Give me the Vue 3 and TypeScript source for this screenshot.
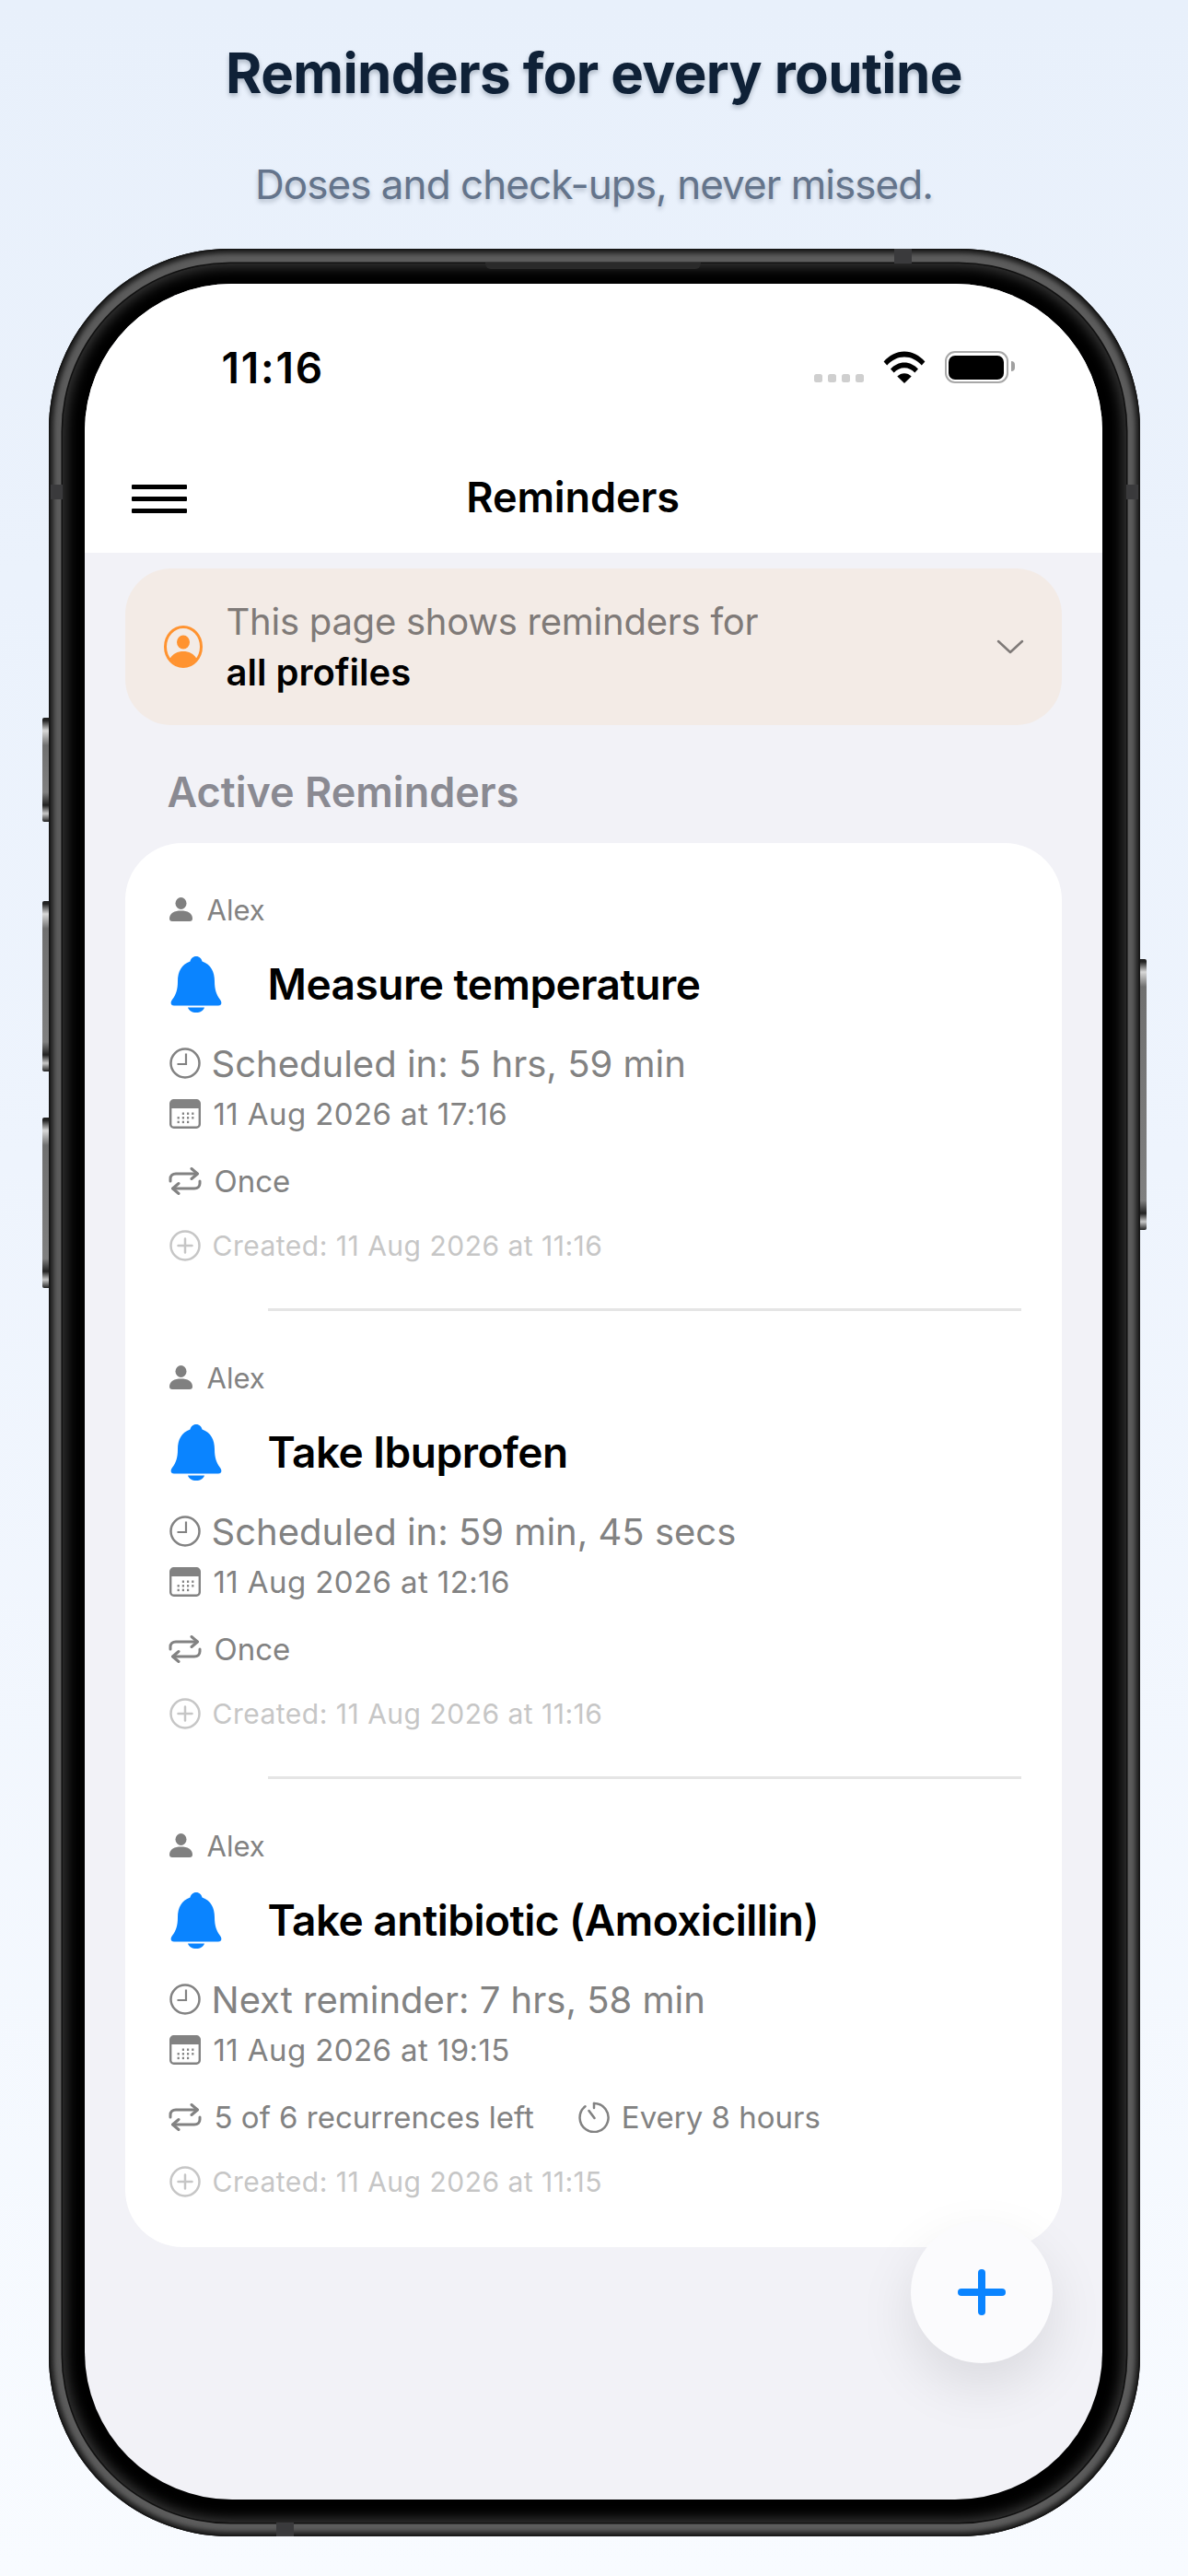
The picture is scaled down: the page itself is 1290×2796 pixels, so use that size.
<script setup lang="ts">
interface Reminder {
  id: number
  title: string
  countdown: string
  date: string
  recurrence: string
  interval?: string
  created: string
}

const reminders: Reminder[] = [
  {
    id: 1,
    title: 'Measure temperature',
    countdown: 'Scheduled in: 5 hrs, 59 min',
    date: '11 Aug 2026 at 17:16',
    recurrence: 'Once',
    created: 'Created: 11 Aug 2026 at 11:16',
  },
  {
    id: 2,
    title: 'Take Ibuprofen',
    countdown: 'Scheduled in: 59 min, 45 secs',
    date: '11 Aug 2026 at 12:16',
    recurrence: 'Once',
    created: 'Created: 11 Aug 2026 at 11:16',
  },
  {
    id: 3,
    title: 'Take antibiotic (Amoxicillin)',
    countdown: 'Next reminder: 7 hrs, 58 min',
    date: '11 Aug 2026 at 19:15',
    recurrence: '5 of 6 recurrences left',
    interval: 'Every 8 hours',
    created: 'Created: 11 Aug 2026 at 11:15',
  },
]

// calendar grid dots
const calendarDots: { x: number, y: number }[] = []
for (let row = 0; row < 3; row++) {
  for (let col = 0; col < 4; col++) {
    if ((row === 0 && col === 0) || (row === 2 && col === 3))
      continue
    calendarDots.push({ x: 8.6 + col * 5.2, y: 14.5 + row * 4.6 })
  }
}
</script>

<template>
  <div class="page">
    <header class="hero">
      <h1>Reminders for every routine</h1>
      <p>Doses and check-ups, never missed.</p>
    </header>

    <div class="phone">
      <span class="btn btn-mute" />
      <span class="btn btn-up" />
      <span class="btn btn-down" />
      <span class="btn btn-power" />
      <span class="band band-top" />
      <span class="band band-bottom" />
      <span class="band band-left" />
      <span class="band band-right" />
      <span class="speaker" />

      <div class="bezel">
        <div class="screen">
          <div class="topbar">
            <div class="status">
              <span class="time">11:16</span>
              <div class="status-icons">
                <div class="signal">
                  <i /><i /><i /><i />
                </div>
                <svg class="wifi" viewBox="0 0 46 35">
                  <path d="M0.6 11.5C6.5 4.8 14.4 0.5 23 0.5s16.5 4.3 22.4 11l-3.6 4C36.800 10 30.200 6.600 23 6.600S9.200 10 4.200 15.500Z" />
                  <path d="M8 19.500c4-4.300 9.300-7 15-7s11 2.700 15 7l-3.700 4c-3-3.200-7-5.200-11.300-5.200s-8.300 2-11.300 5.200Z" />
                  <path d="M15.300 27.500c2.100-2.100 4.800-3.300 7.700-3.300s5.600 1.200 7.700 3.300L23 35Z" />
                </svg>
                <div class="battery">
                  <span class="battery-fill" />
                </div>
              </div>
            </div>
            <div class="navbar">
              <div class="burger">
                <i /><i /><i />
              </div>
              <span class="nav-title">Reminders</span>
            </div>
          </div>

          <div class="banner">
            <svg class="profile-icon" viewBox="0 0 42 46">
              <ellipse cx="21" cy="23" rx="19.500" ry="21.500" fill="none" stroke="#ff9330" stroke-width="3" />
              <ellipse cx="21" cy="18" rx="7" ry="7.500" fill="#ff9330" />
              <path d="M6.500 36c3-5.500 8.500-8 14.500-8s11.500 2.500 14.500 8c-3.500 4.500-8.500 7.500-14.500 7.500S10 40.500 6.500 36Z" fill="#ff9330" />
            </svg>
            <div class="banner-text">
              <span>This page shows reminders for</span>
              <strong>all profiles</strong>
            </div>
            <svg class="chevron" viewBox="0 0 30 16">
              <path d="M2 2l13 12L28 2" fill="none" stroke="#7f7a78" stroke-width="2.500" stroke-linecap="round" stroke-linejoin="round" />
            </svg>
          </div>

          <h2 class="section-title">Active Reminders</h2>

          <div class="card">
            <article v-for="item in reminders" :key="item.id" class="item">
              <div class="owner">
                <svg class="owner-icon" viewBox="0 0 25 26">
                  <ellipse cx="12.500" cy="6.500" rx="6" ry="6.500" />
                  <path d="M0 23c0-6 5.500-8.500 12.500-8.500S25 17 25 23c0 2-1 3-3 3H3c-2 0-3-1-3-3Z" />
                </svg>
                <span>Alex</span>
              </div>

              <div class="title-row">
                <svg class="bell" viewBox="0 0 56 61">
                  <path d="M28 0c3.500 0 6 2.500 6.500 5.500C44 8.500 48 17 48 27c0 9 2 15 6 20 2.500 3 1.500 6.500-2 6.500H4c-3.500 0-4.500-3.500-2-6.500 4-5 6-11 6-20C8 17 12 8.500 21.500 5.500 22 2.500 24.500 0 28 0Z" />
                  <path d="M19 55.500h18c-1 3.500-4.500 5.500-9 5.500s-8-2-9-5.500Z" />
                </svg>
                <span class="item-title">{{ item.title }}</span>
              </div>

              <div class="countdown">
                <svg class="icon" viewBox="0 0 34 34">
                  <circle cx="17" cy="17" r="15.500" fill="none" stroke="currentColor" stroke-width="2.500" />
                  <path d="M18 6.500V18H8.500" fill="none" stroke="currentColor" stroke-width="2.200" />
                </svg>
                <span>{{ item.countdown }}</span>
              </div>

              <div class="date">
                <svg class="icon" viewBox="0 0 34 32">
                  <rect x="1.200" y="1.200" width="31.600" height="29.600" rx="3.500" fill="none" stroke="currentColor" stroke-width="2.400" />
                  <path d="M1.200 4.700a3.500 3.500 0 0 1 3.500-3.500h24.600a3.500 3.500 0 0 1 3.500 3.500V10H1.200Z" fill="currentColor" />
                  <rect v-for="(dot, i) in calendarDots" :key="i" :x="dot.x" :y="dot.y" width="2.200" height="2.400" fill="currentColor" />
                </svg>
                <span>{{ item.date }}</span>
              </div>

              <div class="meta">
                <div class="meta-part">
                  <svg class="icon-repeat" viewBox="0 0 36 30">
                    <path d="M2 15v-2.500C2 9 4.500 7 8 7h23" fill="none" stroke="currentColor" stroke-width="3" stroke-linecap="round" />
                    <path d="M25 1.500L31.500 7 25 12.500" fill="none" stroke="currentColor" stroke-width="3" stroke-linecap="round" stroke-linejoin="round" />
                    <path d="M34 15v2.500c0 3.500-2.500 5.500-6 5.500H5" fill="none" stroke="currentColor" stroke-width="3" stroke-linecap="round" />
                    <path d="M11 17.500L4.500 23l6.500 5.500" fill="none" stroke="currentColor" stroke-width="3" stroke-linecap="round" stroke-linejoin="round" />
                  </svg>
                  <span>{{ item.recurrence }}</span>
                </div>
                <div v-if="item.interval" class="meta-part interval">
                  <svg class="icon-timer" viewBox="0 0 34 34">
                    <path d="M17 2a15.500 15.500 0 1 1-9.500 3.300" fill="none" stroke="currentColor" stroke-width="2.500" stroke-linecap="round" />
                    <path d="M17 2v5" fill="none" stroke="currentColor" stroke-width="2.500" stroke-linecap="round" />
                    <path d="M11.500 10l6 8" fill="none" stroke="currentColor" stroke-width="2.600" stroke-linecap="round" />
                  </svg>
                  <span>{{ item.interval }}</span>
                </div>
              </div>

              <div class="created">
                <svg class="icon" viewBox="0 0 34 34">
                  <circle cx="17" cy="17" r="15.500" fill="none" stroke="currentColor" stroke-width="2.500" />
                  <path d="M17 9.500v15M9.500 17h15" fill="none" stroke="currentColor" stroke-width="2.500" stroke-linecap="round" />
                </svg>
                <span>{{ item.created }}</span>
              </div>
            </article>
          </div>

          <button class="fab" type="button" aria-label="Add reminder">
            <span class="plus-h" />
            <span class="plus-v" />
          </button>
        </div>
      </div>
    </div>
  </div>
</template>

<style>
html,
body {
  margin: 0;
  background: #f8fbff;
}
</style>

<style scoped>
.page {
  width: 1290px;
  height: 2796px;
  box-sizing: border-box;
  overflow: hidden;
  display: flex;
  flex-direction: column;
  align-items: center;
  background: linear-gradient(180deg, #e8f0fb 0%, #eef4fd 45%, #f8fbff 100%);
  font-family: Inter, "Liberation Sans", sans-serif;
}

.hero {
  height: 270px;
  text-align: center;
  flex: none;
}

.hero h1 {
  margin: 48px 0 0;
  font-size: 60px;
  line-height: 62px;
  font-weight: 700;
  letter-spacing: -0.6px;
  color: #0f2137;
  text-shadow: 0 3px 5px rgba(15, 33, 55, 0.28);
}

.hero p {
  margin: 64px 0 0;
  font-size: 44px;
  line-height: 52px;
  font-weight: 400;
  letter-spacing: -0.95px;
  color: #64748b;
  text-shadow: 0 3px 5px rgba(15, 33, 55, 0.25);
}

.phone {
  position: relative;
  width: 1185px;
  height: 2483px;
  box-sizing: border-box;
  padding: 16px 15px 15px;
  border-radius: 196px;
  background: #5c5c5c;
  box-shadow:
    inset 0 0 0 1.500px #161616,
    inset 0 0 5px 5px #1e1e1e;
  flex: none;
}

.bezel {
  position: relative;
  z-index: 1;
  height: 100%;
  box-sizing: border-box;
  padding: 22px 26px 25px 24px;
  border-radius: 182px;
  background: #000;
  box-shadow:
    0 0 0 1.500px #111,
    inset 0 0 14px 4px #383838;
}

.screen {
  position: relative;
  height: 100%;
  overflow: hidden;
  border-radius: 160px;
  background: #f2f2f7;
}

.btn {
  position: absolute;
  width: 7px;
  background: linear-gradient(180deg, #222 0, #222 3px, #d8d8d8 14px, #707070 30px, #808080 calc(100% - 32px), #222 calc(100% - 18px), #c8c8c8 calc(100% - 9px), #222 100%);
  border-radius: 2px 0 0 2px;
}

.btn-mute {
  left: -7px;
  top: 509px;
  height: 113px;
}

.btn-up {
  left: -7px;
  top: 708px;
  height: 185px;
}

.btn-down {
  left: -7px;
  top: 943px;
  height: 185px;
}

.btn-power {
  right: -7px;
  top: 771px;
  height: 294px;
  border-radius: 0 2px 2px 0;
}

.band {
  position: absolute;
  z-index: 2;
  background: #3a3a3c;
}

.band-top {
  top: 0;
  left: 918px;
  width: 19px;
  height: 16px;
}

.band-bottom {
  bottom: 0;
  left: 247px;
  width: 19px;
  height: 15px;
}

.band-left {
  left: 2px;
  top: 256px;
  width: 13px;
  height: 16px;
}

.band-right {
  right: 2px;
  top: 256px;
  width: 13px;
  height: 16px;
}

.speaker {
  position: absolute;
  z-index: 2;
  top: 15px;
  left: 474px;
  width: 234px;
  height: 7px;
  border-radius: 0 0 6px 6px;
  background: #2a2a2a;
}

.topbar {
  height: 292px;
  background: #fff;
}

.status {
  height: 200px;
  box-sizing: border-box;
  padding: 66px 102px 0 149px;
  display: flex;
  justify-content: space-between;
  align-items: flex-start;
}

.time {
  font-size: 46px;
  line-height: 50px;
  font-weight: 600;
  letter-spacing: 1.8px;
  color: #000;
}

.status-icons {
  display: flex;
  align-items: flex-start;
  margin-top: 7px;
}

.signal {
  display: flex;
  gap: 6px;
  margin-top: 25px;
  margin-right: 21px;
}

.signal i {
  width: 9px;
  height: 9px;
  border-radius: 2.500px;
  background: #cfcfcf;
}

.wifi {
  width: 46px;
  height: 35px;
  margin-right: 21px;
  fill: #000;
}

.battery {
  position: relative;
  width: 69px;
  height: 35px;
  box-sizing: border-box;
  padding: 2.500px;
  border: 2.500px solid #a8a8a8;
  border-radius: 11px;
}

.battery::after {
  content: "";
  position: absolute;
  right: -9px;
  top: 9px;
  width: 4px;
  height: 11px;
  background: #a0a0a0;
  border-radius: 0 4px 4px 0;
}

.battery-fill {
  display: block;
  height: 100%;
  background: #000;
  border-radius: 7px;
}

.navbar {
  position: relative;
  display: flex;
  align-items: center;
  justify-content: center;
  height: 64px;
  padding-right: 44px;
}

.burger {
  position: absolute;
  left: 51px;
  top: 18px;
  display: flex;
  flex-direction: column;
  gap: 8.500px;
}

.burger i {
  display: block;
  width: 60px;
  height: 4.500px;
  background: #000;
  border-radius: 1px;
}

.nav-title {
  font-size: 45px;
  line-height: 52px;
  font-weight: 600;
  letter-spacing: -0.1px;
  color: #000;
}

.banner {
  display: flex;
  align-items: center;
  height: 170px;
  box-sizing: border-box;
  margin: 17px 44px 0;
  padding: 0 41px 0 42px;
  background: #f3ebe6;
  border-radius: 50px;
}

.profile-icon {
  width: 42px;
  height: 46px;
  flex: none;
}

.banner-text {
  display: flex;
  flex-direction: column;
  gap: 0;
  margin-left: 26px;
  flex: 1;
}

.banner-text span {
  font-size: 40px;
  line-height: 55px;
  letter-spacing: -0.25px;
  color: #7f7a78;
}

.banner-text strong {
  font-size: 40px;
  line-height: 55px;
  font-weight: 600;
  color: #000;
}

.chevron {
  width: 30px;
  height: 16px;
  flex: none;
}

.section-title {
  margin: 45px 0 0 90px;
  height: 83px;
  font-size: 45px;
  line-height: 56px;
  font-weight: 600;
  color: #8a8a92;
}

.card {
  margin: 0 44px;
  padding: 3px 44px 0 48px;
  height: 1524px;
  box-sizing: border-box;
  background: #fff;
  border-radius: 62px;
}

.item {
  position: relative;
  box-sizing: border-box;
  height: 508px;
  padding-top: 49px;
  color: #828282;
}

.item:not(:last-child)::after {
  content: "";
  position: absolute;
  left: 107px;
  right: 0;
  bottom: 3px;
  height: 3px;
  background: #e5e5e5;
}

.owner,
.title-row,
.countdown,
.date,
.meta,
.meta-part,
.created {
  display: flex;
  align-items: center;
}

.owner {
  height: 40px;
  gap: 16px;
  font-size: 31px;
}

.owner-icon {
  width: 25px;
  height: 26px;
  fill: #808080;
}

.title-row {
  height: 78px;
  margin-top: 22px;
  gap: 50px;
}

.bell {
  width: 56px;
  height: 61px;
  margin-left: 1px;
  fill: #0a84ff;
  flex: none;
}

.item-title {
  font-size: 46px;
  line-height: 60px;
  font-weight: 600;
  letter-spacing: -0.5px;
  color: #000;
}

.icon {
  width: 34px;
  height: 34px;
  flex: none;
}

.countdown {
  height: 48px;
  margin-top: 23px;
  gap: 12px;
  font-size: 40px;
}

.date {
  height: 40px;
  margin-top: 11px;
  gap: 14px;
  font-size: 33px;
  letter-spacing: 0.4px;
}

.date .icon {
  height: 32px;
}

.meta {
  height: 40px;
  margin-top: 33px;
  font-size: 33px;
}

.meta-part {
  gap: 14px;
}

.icon-repeat {
  width: 36px;
  height: 30px;
  margin-left: -1px;
  flex: none;
}

.icon-timer {
  width: 34px;
  height: 34px;
  flex: none;
}

.interval {
  margin-left: 48px;
  gap: 13px;
}

.created {
  height: 40px;
  margin-top: 30px;
  gap: 13px;
  font-size: 30px;
  letter-spacing: 0.5px;
  color: #c6c6c6;
}

.fab {
  position: absolute;
  right: 54px;
  bottom: 148px;
  width: 154px;
  height: 154px;
  padding: 0;
  border: 0;
  border-radius: 50%;
  background: #fbfbfd;
  box-shadow: 0 24px 60px rgba(0, 0, 0, 0.1);
}

.plus-h,
.plus-v {
  position: absolute;
  background: #0a84ff;
  border-radius: 4px;
}

.plus-h {
  left: 51px;
  top: 73px;
  width: 52px;
  height: 8px;
}

.plus-v {
  left: 73px;
  top: 52px;
  width: 8px;
  height: 50px;
}
</style>
